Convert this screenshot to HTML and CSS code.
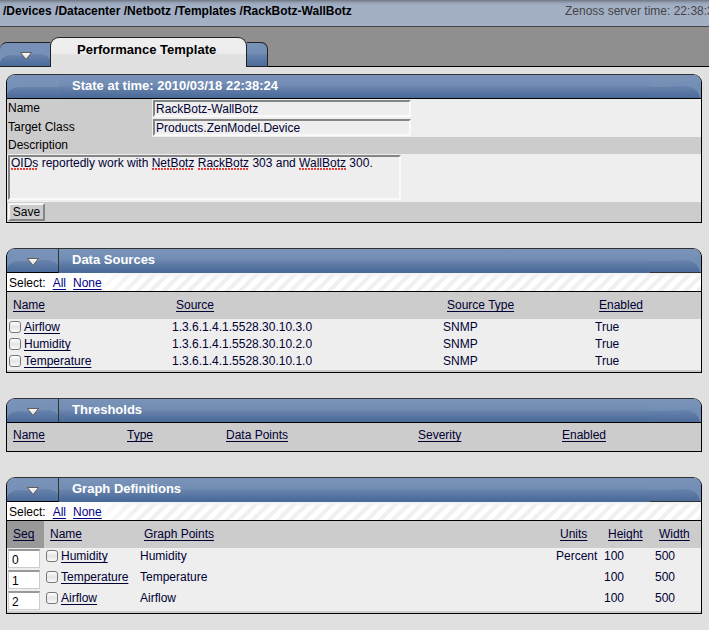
FILE: index.html
```html
<!DOCTYPE html>
<html lang="en">
<head>
<meta charset="utf-8">
<title>Performance Template</title>
<link rel="stylesheet" href="styles.css">
</head>
<body>
<svg class="defs" aria-hidden="true">
  <defs>
    <linearGradient id="tri" x1="0" y1="0" x2="0" y2="1"><stop offset="0" stop-color="#fff"/><stop offset="1" stop-color="#d8d4cc"/></linearGradient>
    <linearGradient id="shade" x1="0" y1="0" x2="0" y2="1"><stop offset="0" stop-color="#6883ac"/><stop offset="1" stop-color="#4b6b9a"/></linearGradient>
    <symbol id="arrow" viewBox="0 0 14 10"><path d="M1.5 1.5h11L7 8.5z" fill="url(#tri)" stroke="#5d5d5d" stroke-width="1"/></symbol>
    <symbol id="cap-left" viewBox="0 0 51 23" preserveAspectRatio="none"><path d="M0 23V20Q2 12 12 12Q24 13 30 12Q46 9 51 16V23z" fill="url(#shade)"/></symbol>
    <symbol id="cap-left-flat" viewBox="0 0 51 23" preserveAspectRatio="none"><path d="M0 23V20Q2 12 14 12H51V23z" fill="url(#shade)"/></symbol>
    <symbol id="cap-right" viewBox="0 0 51 23" preserveAspectRatio="none"><path d="M0 23V12Q20 12 32 11Q48 11 50 23z" fill="url(#shade)"/></symbol>
  </defs>
</svg>
<header class="topbar">
  <nav class="crumbs"><a href="#">/Devices</a> <a href="#">/Datacenter</a> <a href="#">/Netbotz</a> <a href="#">/Templates</a> <a href="#">/RackBotz-WallBotz</a></nav>
  <div class="clock">Zenoss server time: 22:38:3</div>
</header>
<nav class="tabs">
  <button class="tab-menu" type="button" aria-label="Page menu"><svg class="cap"><use href="#cap-left"/></svg><svg class="arrow"><use href="#arrow"/></svg></button>
  <a class="tab-active" href="#">Performance Template</a>
  <span class="tab-end"></span>
</nav>
<main>
  <form class="panel">
    <div class="head lined">
      <span class="menu plain"><svg class="cap"><use href="#cap-left-flat"/></svg></span>
      <h2>State at time: 2010/03/18 22:38:24</h2>
      <svg class="end"><use href="#cap-right"/></svg>
    </div>
    <div class="field"><label for="name">Name</label><div><input id="name" class="text" type="text" value="RackBotz-WallBotz"></div></div>
    <div class="field"><label for="target">Target Class</label><div><input id="target" class="text" type="text" value="Products.ZenModel.Device"></div></div>
    <label class="desc-label" for="desc">Description</label>
    <div class="desc">
      <textarea id="desc" spellcheck="false">OIDs reportedly work with NetBotz RackBotz 303 and WallBotz 300.</textarea>
      <svg class="spell" viewBox="0 0 340 2" aria-hidden="true"><path d="M0 1H26M141 1H183M187 1H237M288 1H335" stroke="#e8403a" stroke-width="2" stroke-dasharray="2 1"/></svg>
    </div>
    <div class="actions"><button class="save" type="button">Save</button></div>
  </form>

  <section class="panel">
    <div class="head">
      <button class="menu" type="button" aria-label="Data Sources menu"><svg class="cap"><use href="#cap-left"/></svg><svg class="arrow"><use href="#arrow"/></svg></button>
      <h2>Data Sources</h2>
      <svg class="end"><use href="#cap-right"/></svg>
    </div>
    <div class="select">Select: <a href="#">All</a> <a href="#">None</a></div>
    <table>
      <colgroup><col class="s-name"><col><col class="s-type"><col class="s-enabled"></colgroup>
      <thead><tr><th><a href="#">Name</a></th><th><a href="#">Source</a></th><th><a href="#">Source Type</a></th><th><a href="#">Enabled</a></th></tr></thead>
      <tbody>
        <tr><td><span class="pick"><input type="checkbox" aria-label="Select Airflow"><a href="#">Airflow</a></span></td><td>1.3.6.1.4.1.5528.30.10.3.0</td><td>SNMP</td><td>True</td></tr>
        <tr><td><span class="pick"><input type="checkbox" aria-label="Select Humidity"><a href="#">Humidity</a></span></td><td>1.3.6.1.4.1.5528.30.10.2.0</td><td>SNMP</td><td>True</td></tr>
        <tr><td><span class="pick"><input type="checkbox" aria-label="Select Temperature"><a href="#">Temperature</a></span></td><td>1.3.6.1.4.1.5528.30.10.1.0</td><td>SNMP</td><td>True</td></tr>
      </tbody>
    </table>
    <div class="foot"></div>
  </section>

  <section class="panel">
    <div class="head lined">
      <button class="menu" type="button" aria-label="Thresholds menu"><svg class="cap"><use href="#cap-left"/></svg><svg class="arrow"><use href="#arrow"/></svg></button>
      <h2>Thresholds</h2>
      <svg class="end"><use href="#cap-right"/></svg>
    </div>
    <table class="thresholds">
      <colgroup><col class="t-name"><col class="t-type"><col><col class="t-severity"><col class="t-enabled"></colgroup>
      <thead><tr><th><a href="#">Name</a></th><th><a href="#">Type</a></th><th><a href="#">Data Points</a></th><th><a href="#">Severity</a></th><th><a href="#">Enabled</a></th></tr></thead>
    </table>
    <div class="foot"></div>
  </section>

  <section class="panel">
    <div class="head">
      <button class="menu" type="button" aria-label="Graph Definitions menu"><svg class="cap"><use href="#cap-left"/></svg><svg class="arrow"><use href="#arrow"/></svg></button>
      <h2>Graph Definitions</h2>
      <svg class="end"><use href="#cap-right"/></svg>
    </div>
    <div class="select">Select: <a href="#">All</a> <a href="#">None</a></div>
    <table class="graphs">
      <colgroup><col class="g-seq"><col class="g-name"><col><col class="g-units"><col class="g-height"><col class="g-width"></colgroup>
      <thead><tr><th class="sorted"><a href="#">Seq</a></th><th><a href="#">Name</a></th><th><a href="#">Graph Points</a></th><th><a href="#">Units</a></th><th><a href="#">Height</a></th><th><a href="#">Width</a></th></tr></thead>
      <tbody>
        <tr><td class="seq"><input type="text" value="0" aria-label="Sequence of Humidity"></td><td><span class="pick"><input type="checkbox" aria-label="Select Humidity graph"><a href="#">Humidity</a></span></td><td>Humidity</td><td>Percent</td><td>100</td><td>500</td></tr>
        <tr><td class="seq"><input type="text" value="1" aria-label="Sequence of Temperature"></td><td><span class="pick"><input type="checkbox" aria-label="Select Temperature graph"><a href="#">Temperature</a></span></td><td>Temperature</td><td></td><td>100</td><td>500</td></tr>
        <tr><td class="seq"><input type="text" value="2" aria-label="Sequence of Airflow"></td><td><span class="pick"><input type="checkbox" aria-label="Select Airflow graph"><a href="#">Airflow</a></span></td><td>Airflow</td><td></td><td>100</td><td>500</td></tr>
      </tbody>
    </table>
    <div class="foot"></div>
  </section>
</main>
</body>
</html>
```
FILE: styles.css
```css
* { box-sizing: border-box; }
body {
  margin: 0;
  background: #e0e0e0;
  color: #000;
  font: 12px/16px "Liberation Sans", Arial, sans-serif;
}
button, input, textarea { font: inherit; margin: 0; }
.defs { display: block; width: 0; height: 0; }

.topbar {
  display: flex;
  height: 27px;
  padding-top: 3px;
  border-bottom: 1px solid #444;
  background: linear-gradient(#6f7782, #98a4b8 3px, #a3afc5 6px);
}
.crumbs { flex: 1; padding-left: 3px; font-weight: bold; white-space: nowrap; }
.crumbs a { color: #000; text-decoration: none; }
.clock { flex: 0 0 144px; overflow: hidden; white-space: nowrap; color: #444; }

.tabs {
  display: flex;
  align-items: flex-end;
  height: 40px;
  background: #8f8f8f;
  box-shadow: inset 0 -1px #000;
}
.tab-menu, .tab-end {
  position: relative;
  height: 25px;
  padding: 0;
  overflow: hidden;
  border: 1px solid #222;
  background: linear-gradient(#7a93b9, #718cb3 11px, #6581aa 12px, #4b6b9a);
}
.tab-menu {
  width: 50px;
  border-left: 0;
  border-right: 0;
  border-radius: 7px 0 0 0;
  background: #7790b7;
}
.tab-end { width: 21px; border-left: 0; border-radius: 0 7px 0 0; }
.tab-active {
  width: 197px;
  height: 30px;
  padding: 4px 0 0 26px;
  border: 1px solid #222;
  border-bottom: 0;
  border-radius: 9px 9px 0 0;
  background: linear-gradient(#efefef, #ececec 15px, #e0e0e0 17px);
  color: #000;
  font-size: 13px;
  font-weight: bold;
  text-decoration: none;
}

main { display: grid; gap: 25px; padding: 7px 7px 16px 6px; }
.panel {
  overflow: hidden;
  border: 1px solid #000;
  border-top-color: #333;
  border-radius: 9px 9px 0 0;
  background: #ccc;
}
.head {
  display: flex;
  height: 24px;
  background: linear-gradient(#7a93b9, #718cb3 11px, #6883ac 12px, #4b6b9a 22px);
}
.head.lined { border-bottom: 1px solid #000; }
.head h2 {
  flex: 1;
  margin: 0;
  padding: 3px 0 0 13px;
  color: #fff;
  font-size: 13px;
  line-height: 16px;
}
.menu {
  position: relative;
  width: 52px;
  padding: 0;
  border: 0;
  border-right: 1px solid #333;
  border-bottom: 1px solid #000;
  background: linear-gradient(#7a93b9, #718cb3);
}
.menu.plain { border-right: 0; border-bottom: 0; }
.lined .menu { border-bottom: 0; }
.cap { display: block; width: 100%; height: 23px; }
.arrow { position: absolute; left: 19px; top: 8px; width: 14px; height: 10px; }
.end {
  width: 51px;
  height: 24px;
  border-bottom: 1px solid #333;
  background: linear-gradient(#7a93b9, #728db4 12px);
}
.lined .end { height: 23px; border-bottom: 0; }

.field { display: grid; grid-template-columns: 145px 1fr; height: 19px; background: #eee; }
.field label { padding: 1px; background: #ccc; }
.field div { padding: 1px; }
.text, textarea {
  display: block;
  border: 2px solid;
  border-color: #858585 #fafafa #fafafa #858585;
  background: #eee;
  color: #000033;
  outline: 0;
}
.text { width: 258px; height: 17px; padding: 0 1px; line-height: 13px; }
.desc-label { display: block; height: 17px; padding-left: 1px; }
.desc { position: relative; height: 48px; padding: 1px; background: #eee; }
textarea { width: 393px; height: 45px; padding: 0 1px; line-height: 13px; resize: none; overflow: hidden; }
.spell { position: absolute; left: 4px; top: 14px; width: 340px; height: 2px; }
.actions { height: 20px; padding: 1px; }
.save {
  display: block;
  width: 37px;
  height: 18px;
  padding: 0;
  border: 2px solid;
  border-color: #f5f5f5 #858585 #858585 #f5f5f5;
  background: #ccc;
  line-height: 14px;
}

.select {
  display: flex;
  gap: 7px;
  height: 19px;
  padding: 2px 2px 0;
  border-bottom: 1px solid #000;
  background:
    linear-gradient(90deg, #fff 80px, transparent 130px),
    linear-gradient(#f3f3f3, transparent 5px),
    repeating-linear-gradient(135deg, #fff 0 4px, #f0f0f0 5px 8px, #fff 9px);
}
.select a { color: #00008b; }

table { width: 100%; border-collapse: collapse; table-layout: fixed; color: #000033; }
table a { color: #000033; }
a { text-underline-offset: 2px; }
th { height: 27px; padding: 0 0 1px 6px; text-align: left; font-weight: normal; white-space: nowrap; }
.thresholds th { height: 26px; padding-bottom: 2px; }
tbody { background: #eee; }
td { height: 17px; padding: 0 2px; line-height: 16px; vertical-align: top; white-space: nowrap; }
.graphs td { height: 21px; }
.sorted { background: #999; }
.foot { height: 2px; }
.s-name { width: 163px; }
.s-type { width: 152px; }
.s-enabled { width: 108px; }
.t-name { width: 114px; }
.t-type { width: 99px; }
.t-severity { width: 144px; }
.t-enabled { width: 145px; }
.g-seq { width: 37px; }
.g-name { width: 94px; }
.g-units, .g-width { width: 48px; }
.g-height { width: 51px; }

.pick { display: flex; align-items: center; gap: 3px; height: 16px; }
.pick input {
  appearance: none;
  width: 12px;
  height: 12px;
  border: 1px solid #777;
  border-radius: 3px;
  background: linear-gradient(#fff, #e4e4e4 50%, #fafafa);
}
td.seq { padding: 1px; }
.seq input {
  display: block;
  width: 32px;
  height: 19px;
  padding: 1px 3px 0;
  border: 1px solid #ccc;
  border-top: 2px solid #999;
  background: #fff;
  color: #000;
}
```
